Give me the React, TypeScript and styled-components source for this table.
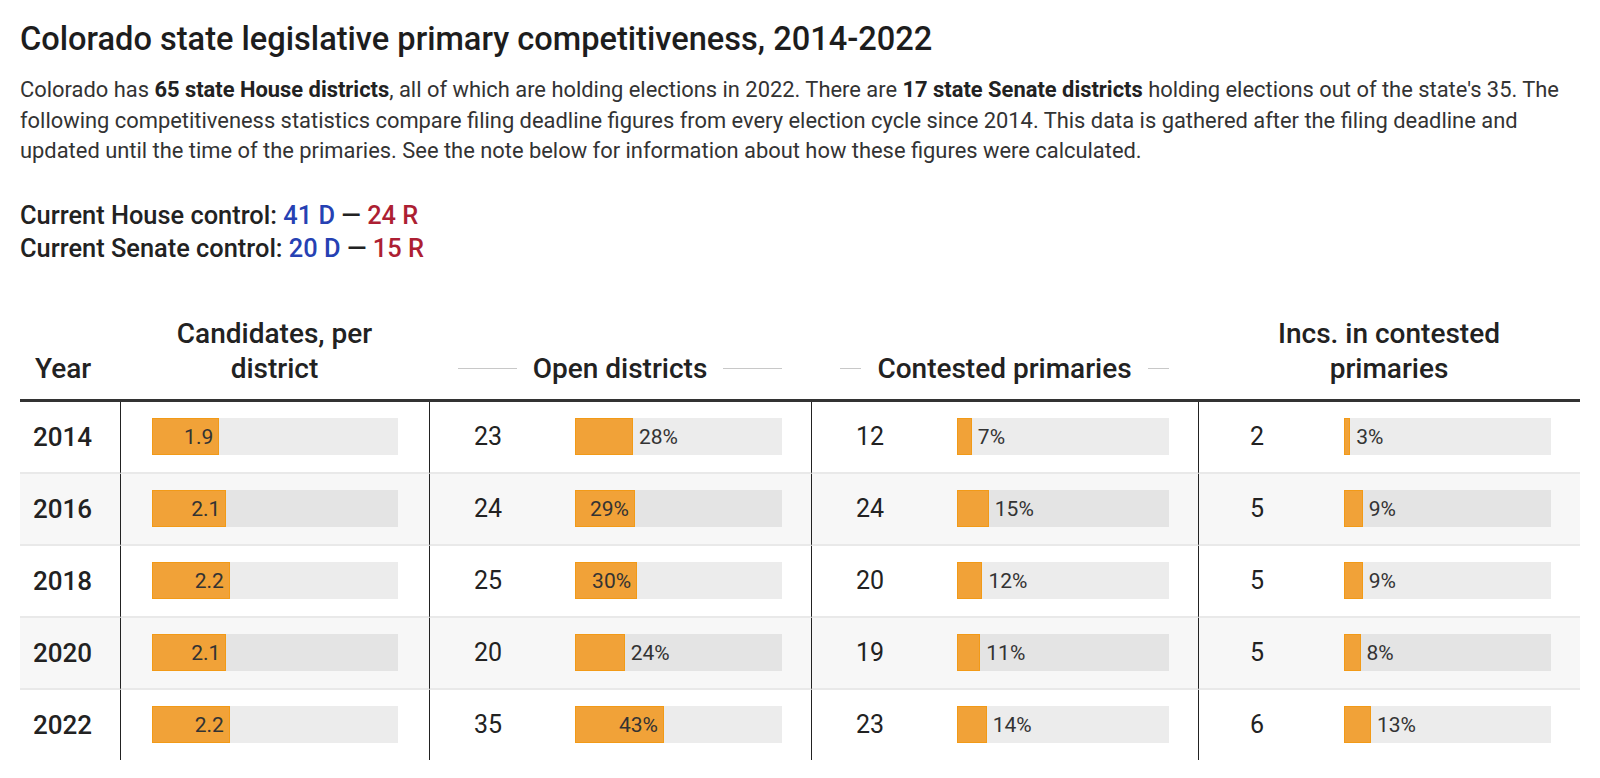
import React from 'react'
import styled, { createGlobalStyle } from 'styled-components'

const GlobalStyle = createGlobalStyle`
  * {
    box-sizing: border-box;
  }
  body {
    margin: 0;
    background: #fff;
    font-family: Roboto, "Liberation Sans", Arial, sans-serif;
    color: #333;
  }
`

const COLS = '100px 309px 382px 387px 382px'

const rows = [
  { year: 2014, cand: 1.9, open: 23, openPct: 28, cont: 12, contPct: 7, inc: 2, incPct: 3 },
  { year: 2016, cand: 2.1, open: 24, openPct: 29, cont: 24, contPct: 15, inc: 5, incPct: 9 },
  { year: 2018, cand: 2.2, open: 25, openPct: 30, cont: 20, contPct: 12, inc: 5, incPct: 9 },
  { year: 2020, cand: 2.1, open: 20, openPct: 24, cont: 19, contPct: 11, inc: 5, incPct: 8 },
  { year: 2022, cand: 2.2, open: 35, openPct: 43, cont: 23, contPct: 14, inc: 6, incPct: 13 },
]

const Page = styled.div`
  padding: 19px 20px 0 20px;
  width: 1600px;
`

const Title = styled.h1`
  margin: 0;
  font-size: 32.6px;
  line-height: 40px;
  font-weight: 500;
  color: #1d1d1d;
`

const Description = styled.p`
  margin: 16px 0 0 0;
  font-size: 21.9px;
  line-height: 30.5px;
  color: #333;
  b {
    font-weight: 700;
    color: #222;
  }
`

const Control = styled.div`
  margin-top: 32px;
  font-size: 25.4px;
  line-height: 33px;
  font-weight: 500;
  color: #222;
`

const Party = styled.span<{ $side: 'D' | 'R' }>`
  color: ${(p) => (p.$side === 'D' ? '#2641b3' : '#ad1f33')};
`

const Table = styled.div`
  margin-top: 51px;
  width: 1560px;
`

const HeaderRow = styled.div`
  display: grid;
  grid-template-columns: ${COLS};
  align-items: end;
  padding-bottom: 13px;
  border-bottom: 3px solid #333;
`

const HeaderCell = styled.div<{ $left?: boolean }>`
  font-size: 28px;
  line-height: 35px;
  font-weight: 500;
  color: #222;
  text-align: ${(p) => (p.$left ? 'left' : 'center')};
  padding: ${(p) => (p.$left ? '0 0 0 15px' : '0 29px')};
`

const GroupHeader = styled.div`
  display: flex;
  align-items: center;
  gap: 16px;
  padding: 0 29px;
  font-size: 28px;
  line-height: 35px;
  font-weight: 500;
  color: #222;
  white-space: nowrap;
`

const Rule = styled.span`
  flex: 1;
  height: 1px;
  background: #c8c8c8;
`

const Row = styled.div<{ $striped: boolean }>`
  display: grid;
  grid-template-columns: ${COLS};
  background: ${(p) => (p.$striped ? '#f7f7f7' : '#fff')};
`

const Cell = styled.div<{ $divider?: boolean; $last?: boolean }>`
  height: ${(p) => (p.$last ? '70px' : '72px')};
  display: flex;
  align-items: center;
  border-left: ${(p) => (p.$divider ? '1px solid #222' : 'none')};
  border-bottom: ${(p) => (p.$last ? 'none' : '2px solid #e9e9e9')};
`

const YearCell = styled(Cell)`
  padding-left: 13px;
  font-size: 26px;
  font-weight: 500;
  color: #222;
`

const BarCell = styled(Cell)`
  padding: 0 31px;
`

const GroupCell = styled(Cell)`
  padding-right: 29px;
`

const Count = styled.span`
  width: 116px;
  flex: none;
  text-align: center;
  font-size: 25px;
  color: #222;
`

const Track = styled.div<{ $gap?: boolean }>`
  flex: 1;
  height: 37px;
  display: flex;
  align-items: center;
  margin-left: ${(p) => (p.$gap ? '29px' : '0')};
  background: rgba(0, 0, 0, 0.075);
`

const Fill = styled.div`
  height: 100%;
  flex: none;
  display: flex;
  align-items: center;
  justify-content: flex-end;
  background: #f1a238;
  border: 1px solid #f29a17;
`

const Label = styled.span<{ $inside: boolean }>`
  font-size: 21px;
  color: #333;
  white-space: nowrap;
  padding: ${(p) => (p.$inside ? '0 5px 0 0' : '0 0 0 6px')};
`

function Bar(props: { pct: number; text: string; inside: boolean; gap?: boolean }) {
  const { pct, text, inside, gap } = props
  return (
    <Track $gap={gap}>
      <Fill style={{ width: `${pct}%` }}>
        {inside && <Label $inside>{text}</Label>}
      </Fill>
      {!inside && <Label $inside={false}>{text}</Label>}
    </Track>
  )
}

function CountBar(props: { count: number; pct: number; last: boolean }) {
  const { count, pct, last } = props
  return (
    <GroupCell $divider $last={last}>
      <Count>{count}</Count>
      <Bar gap pct={pct} text={`${pct}%`} inside={pct >= 29} />
    </GroupCell>
  )
}

export default function App() {
  return (
    <Page>
      <GlobalStyle />
      <Title>Colorado state legislative primary competitiveness, 2014-2022</Title>
      <Description>
        Colorado has <b>65 state House districts</b>, all of which are holding elections in 2022. There are{' '}
        <b>17 state Senate districts</b> holding elections out of the state's 35. The following competitiveness
        statistics compare filing deadline figures from every election cycle since 2014. This data is gathered
        after the filing deadline and updated until the time of the primaries. See the note below for information
        about how these figures were calculated.
      </Description>
      <Control>
        <div>
          Current House control: <Party $side="D">41 D</Party> — <Party $side="R">24 R</Party>
        </div>
        <div>
          Current Senate control: <Party $side="D">20 D</Party> — <Party $side="R">15 R</Party>
        </div>
      </Control>
      <Table>
        <HeaderRow>
          <HeaderCell $left>Year</HeaderCell>
          <HeaderCell>Candidates, per district</HeaderCell>
          <GroupHeader>
            <Rule />
            Open districts
            <Rule />
          </GroupHeader>
          <GroupHeader>
            <Rule />
            Contested primaries
            <Rule />
          </GroupHeader>
          <HeaderCell>Incs. in contested primaries</HeaderCell>
        </HeaderRow>
        {rows.map((r, i) => {
          const last = i === rows.length - 1
          return (
            <Row key={r.year} $striped={i % 2 === 1}>
              <YearCell $last={last}>{r.year}</YearCell>
              <BarCell $divider $last={last}>
                <Bar pct={(r.cand / 6.95) * 100} text={r.cand.toFixed(1)} inside />
              </BarCell>
              <CountBar count={r.open} pct={r.openPct} last={last} />
              <CountBar count={r.cont} pct={r.contPct} last={last} />
              <CountBar count={r.inc} pct={r.incPct} last={last} />
            </Row>
          )
        })}
      </Table>
    </Page>
  )
}
